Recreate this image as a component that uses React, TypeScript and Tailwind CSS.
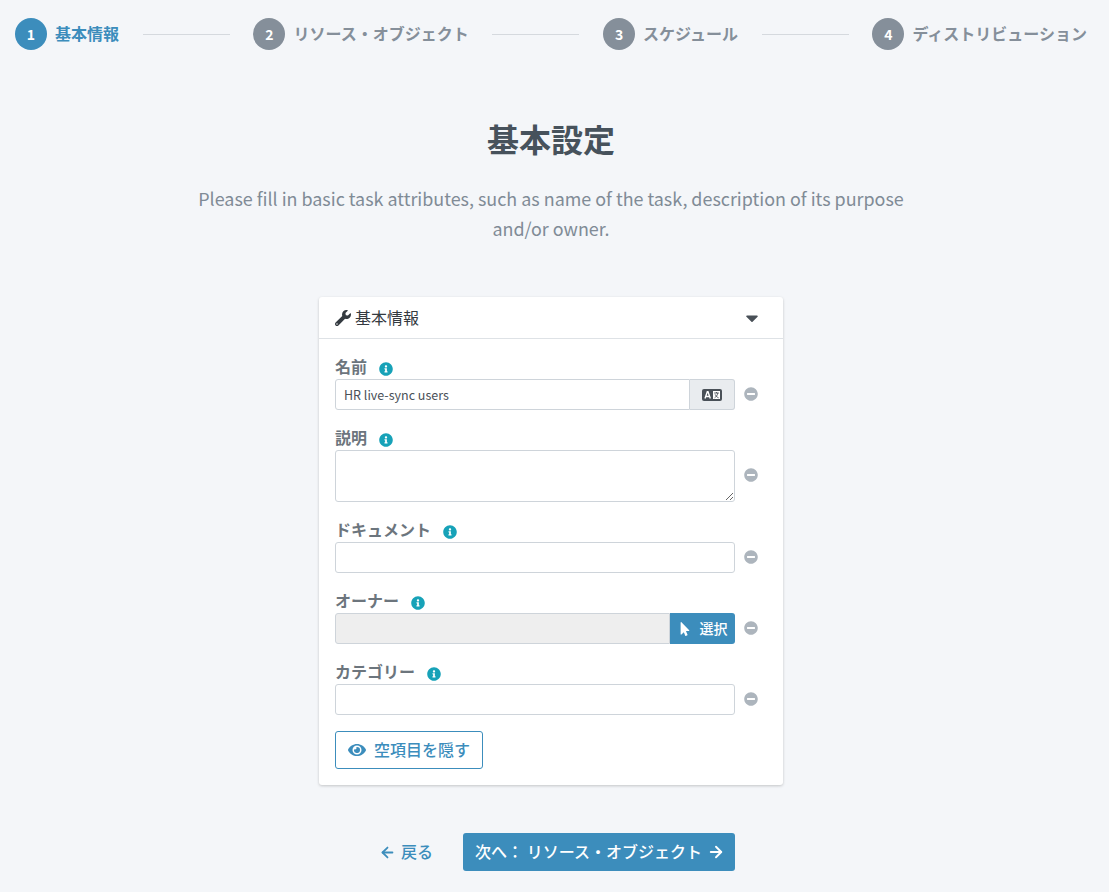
import React from "react";
import { FaWrench, FaCaretDown, FaInfoCircle, FaMinusCircle, FaMousePointer, FaEye } from "react-icons/fa";
import { ArrowLeft, ArrowRight } from "lucide-react";

const font = "font-['Noto_Sans_CJK_JP','Noto_Sans',sans-serif]";

function Step({ n, label, active }: { n: number; label: string; active?: boolean }) {
  return (
    <div className="flex items-center gap-2 shrink-0">
      <div className={`w-8 h-8 rounded-full flex items-center justify-center text-white text-[14px] font-bold ${active ? "bg-[#3c8dbc]" : "bg-[#858f9a]"}`}>{n}</div>
      <span className={`text-[16px] leading-6 font-bold -mt-0.5 ${active ? "text-[#3c8dbc]" : "text-[#858f9a]"}`}>{label}</span>
    </div>
  );
}

function Line() {
  return <div className="w-[87px] h-px bg-[#d5d9de] shrink-0" />;
}

function LangIcon() {
  return (
    <svg width="20" height="12" viewBox="0 0 20 12">
      <rect width="20" height="12" rx="2" fill="#495057" />
      <path d="M3 9.5 L5.3 2.8 L6 2.8 L8.3 9.5 M4.2 7.5 L7.1 7.5" stroke="#fff" strokeWidth="1.4" fill="none" />
      <rect x="11" y="2" width="7" height="8" fill="#fff" />
      <path d="M12.2 4 H16.8 M14.5 3 V4 M15.8 4 C15.4 6.5 14 8 12.6 8.8 M13.2 5.4 C13.8 7 15 8.2 16.6 8.8" stroke="#495057" strokeWidth="0.9" fill="none" />
    </svg>
  );
}

function Field({ label, children }: { label: string; children: React.ReactNode }) {
  return (
    <div className="mb-4">
      <div className="h-6 flex items-center gap-3 pt-0.5">
        <span className="text-[16px] font-bold text-[#6c757d] leading-[24px] -mt-1">{label}</span>
        <FaInfoCircle className="text-[#17a2b8] text-[14px] mt-[2px]" />
      </div>
      <div className="flex items-center">
        <div className="w-[400px]">{children}</div>
        <FaMinusCircle className="ml-[9px] text-[#adb5bd] text-[14px] -mt-[2px]" />
      </div>
    </div>
  );
}

const inputBase = "h-[31px] border border-[#ced4da] px-2 text-[12.5px] text-[#495057] outline-none";

export default function App() {
  return (
    <div className={`${font} bg-[#f4f6f9] w-full h-[892px] overflow-hidden`}>
      <div className="w-[1102px]">
        <div className="flex items-center justify-between px-[15px] pt-[18px]">
          <Step n={1} label="基本情報" active />
          <Line />
          <Step n={2} label="リソース・オブジェクト" />
          <Line />
          <Step n={3} label="スケジュール" />
          <Line />
          <Step n={4} label="ディストリビューション" />
        </div>

        <h1 className="mt-[66px] text-center text-[32px] font-bold text-[#47525c] leading-[45px]">基本設定</h1>
        <p className="mt-[22px] mx-auto w-[730px] text-center text-[17.92px] leading-[30px] text-[#808b96]">
          Please fill in basic task attributes, such as name of the task, description of its purpose and/or owner.
        </p>

        <div className="mt-[54px] mx-auto w-[464px] bg-white rounded-[3px] shadow-[0_1px_3px_rgba(0,0,0,0.2)]">
          <div className="h-[42px] flex items-center justify-between pl-4 pr-[21px] border-b border-[#dee2e6]">
            <div className="flex items-center gap-1 text-[16px] leading-6 text-[#343a40]">
              <FaWrench className="text-[16px] text-[#343a40]" />
              <span className="-mt-0.5">基本情報</span>
            </div>
            <FaCaretDown className="text-[#495057] text-[20px]" />
          </div>
          <div className="p-4">
            <Field label="名前">
              <div className="flex">
                <input readOnly value="HR live-sync users" className={`${inputBase} bg-white rounded-l-[3px] min-w-0 flex-1`} />
                <div className="w-[45px] h-[31px] shrink-0 bg-[#e9ecef] border border-l-0 border-[#ced4da] rounded-r-[3px] flex items-center justify-center">
                  <LangIcon />
                </div>
              </div>
            </Field>
            <Field label="説明">
              <textarea className="block w-full h-[52px] bg-white border border-[#ced4da] rounded-[3px] px-2 outline-none" />
            </Field>
            <Field label="ドキュメント">
              <input className={`${inputBase} w-full bg-white rounded-[3px]`} />
            </Field>
            <Field label="オーナー">
              <div className="flex">
                <input readOnly className={`${inputBase} bg-[#eeeeee] rounded-l-[3px] flex-1 min-w-0`} />
                <div className="w-[65px] h-[31px] shrink-0 bg-[#3c8dbc] rounded-r-[3px] flex items-center justify-center gap-2 text-white text-[14px] leading-5 font-medium">
                  <FaMousePointer className="text-[14px]" />
                  <span className="-mt-0.5">選択</span>
                </div>
              </div>
            </Field>
            <Field label="カテゴリー">
              <input className={`${inputBase} w-full bg-white rounded-[3px]`} />
            </Field>
            <button className="h-[38px] w-[148px] flex items-center justify-center gap-2 border border-[#3c8dbc] rounded-[3px] text-[#3c8dbc] text-[16px] leading-6 font-medium bg-white">
              <FaEye className="text-[18px]" />
              <span className="-mt-0.5">空項目を隠す</span>
            </button>
          </div>
        </div>

        <div className="mt-[48px] mx-auto w-[464px] flex items-center justify-end pr-12">
          <div className="flex items-center gap-[5px] text-[#3c8dbc] text-[16px] leading-6 font-medium">
            <ArrowLeft size={17} strokeWidth={2.5} />
            <span className="-mt-0.5">戻る</span>
          </div>
          <button className="ml-[30px] h-[38px] w-[272px] pl-[2px] flex items-center justify-center gap-[5px] bg-[#3c8dbc] rounded-[3px] text-white text-[16px] leading-6 font-medium">
            <span className="-mt-0.5">次へ： リソース・オブジェクト</span>
            <ArrowRight size={18} strokeWidth={2.5} />
          </button>
        </div>
      </div>
    </div>
  );
}
